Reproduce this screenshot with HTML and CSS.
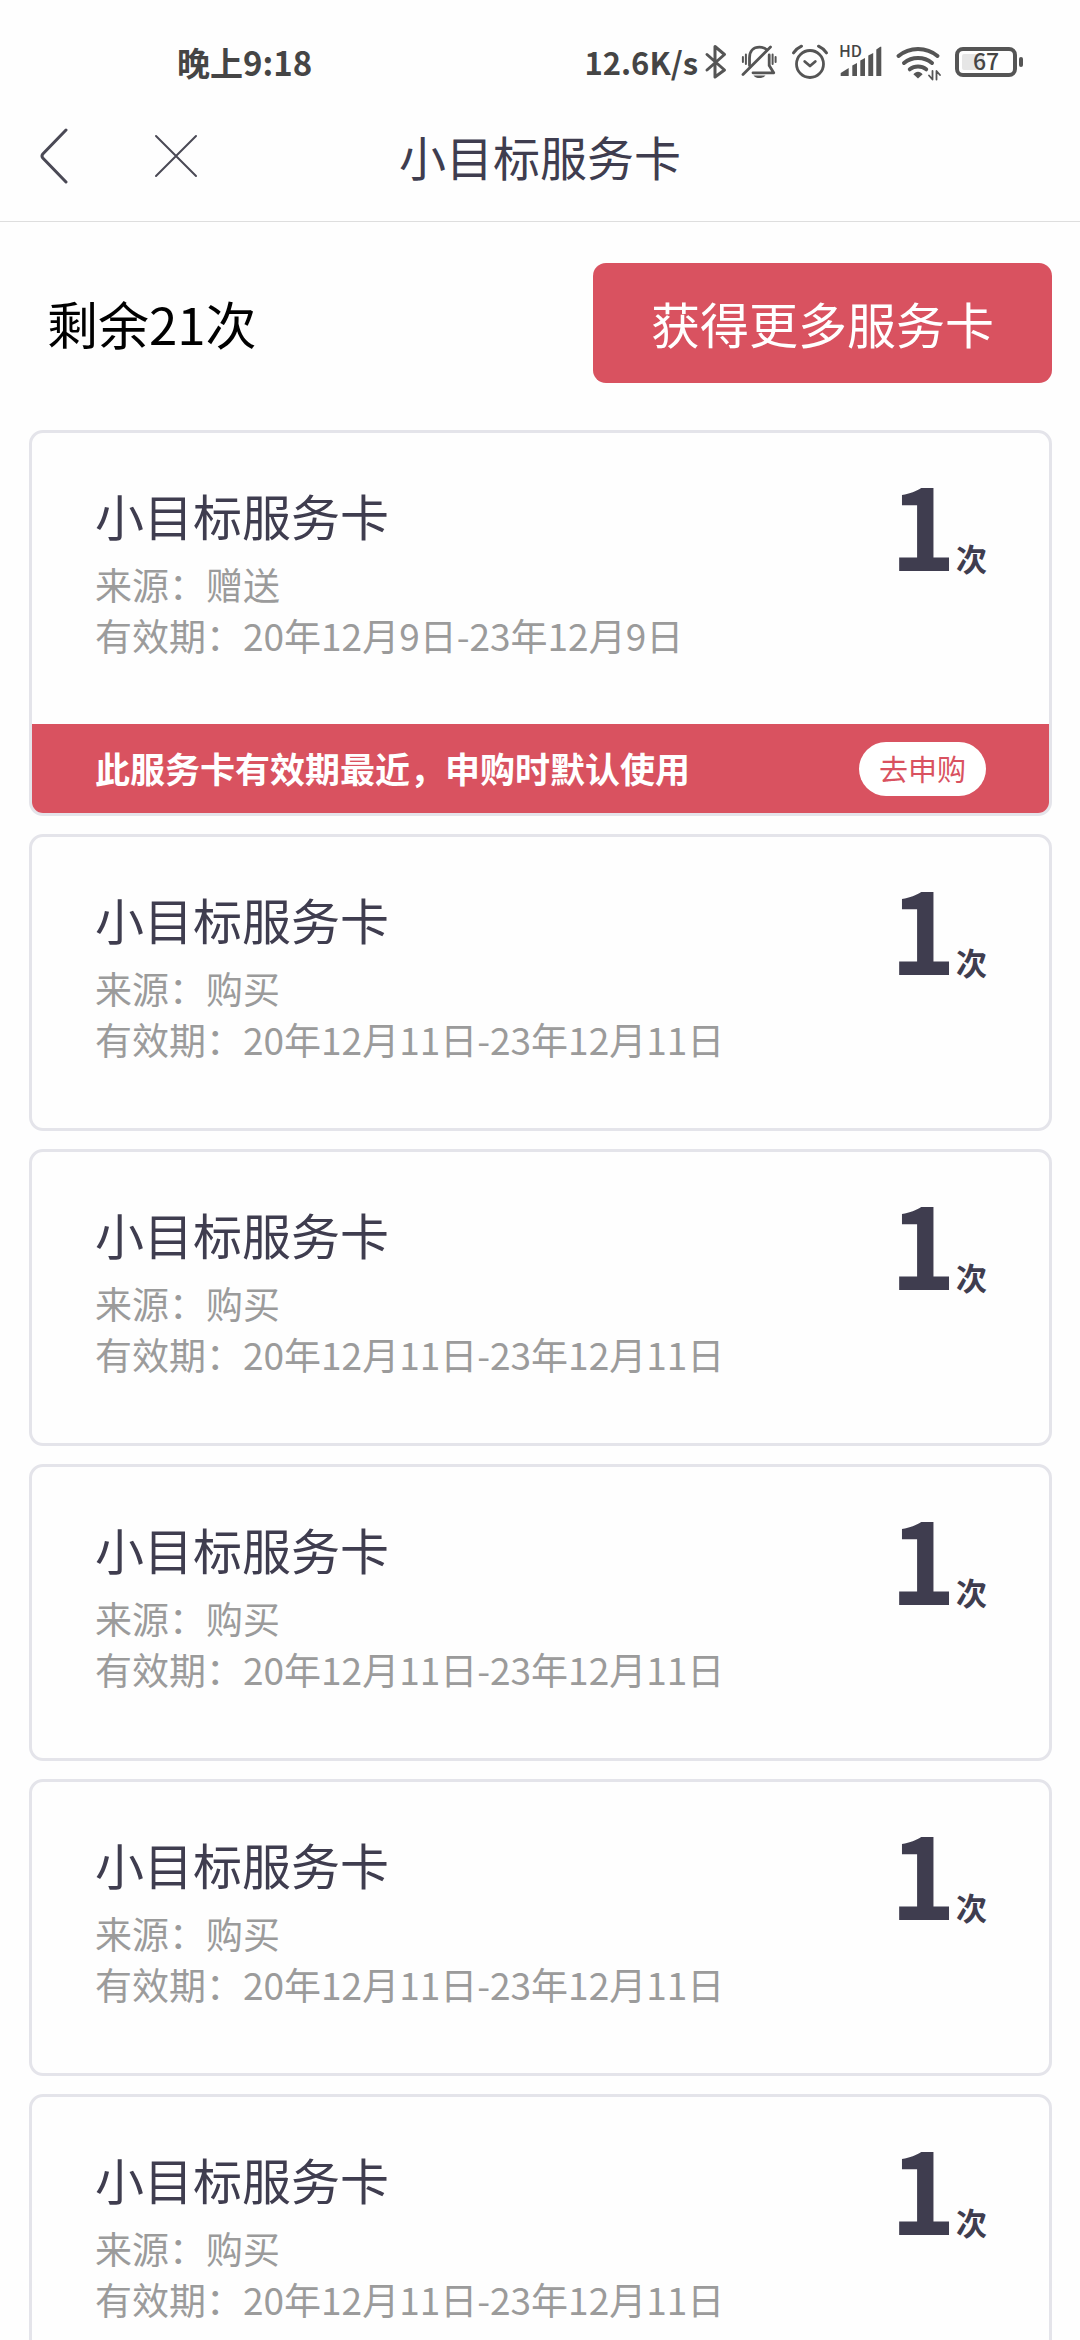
FILE: index.html
```html
<!DOCTYPE html>
<html lang="zh-CN">
<head>
<meta charset="utf-8">
<meta name="viewport" content="width=device-width, initial-scale=1">
<title>小目标服务卡</title>
<link rel="stylesheet" href="styles.css">
</head>
<body>
<div class="status">
  <span class="status-time">晚上9:18</span>
  <div class="status-right">
    <span class="status-speed">12.6K/s</span>
    <div class="status-icons">
      <svg class="icon" width="26" height="36" viewBox="0 0 26 36" aria-hidden="true"><path d="M3 10.5 20.500 26 11 33V2.500L20.500 10.500 3 26" stroke-width="3"/></svg>
      <svg class="icon" width="38" height="36" viewBox="0 0 38 36" aria-hidden="true">
        <path d="M7.500 21.500V14C7.500 7 11.500 3.200 17.500 3.200c3 0 5.500.8 7.300 2.500M27.200 11v10.500l4.500 7.300H11" stroke-width="2.800"/>
        <path d="M28.500 3 1 30.500" stroke-width="2.800"/>
        <path d="M.9 13v5M3.900 10.500v9.500M30.600 10.500v9.500M33.600 13v5" stroke-width="2"/>
        <path class="solid" d="M11.500 31.500h12c-1.500 1.800-3.500 2.600-6 2.600s-4.500-.8-6-2.600z"/>
      </svg>
      <svg class="icon" width="36" height="36" viewBox="0 0 36 36" aria-hidden="true">
        <circle cx="18" cy="20" r="13.500" stroke-width="2.800"/>
        <path d="M12.700 17.500 18 22l5.300-4.500" stroke-width="2.800"/>
        <path d="M1.500 8.800C3.500 6 6 3.800 9.500 2.200M26.500 2.200c3.300 1.500 6 3.700 8 6.600" stroke-width="3"/>
      </svg>
      <svg class="icon" width="44" height="36" viewBox="0 0 44 36" aria-hidden="true">
        <path class="solid" d="M.7 32v-3L8.700 24v8zM12.300 32V21.500l4.700-2.500v13zM20.300 32V16.500l4.700-2.500v18zM28.300 32V11.500l4.900-2.500v23zM36.300 32V5.500l4-2.800h1V32z"/>
        <text class="label-hd" x="-1" y="13">HD</text>
      </svg>
      <svg class="icon" width="46" height="36" viewBox="0 0 46 36" aria-hidden="true">
        <path d="M2.500 12C13.500 2.500 30.500 2.500 41.500 12M8 19c8-6.700 20-6.700 28 0M13.800 25.300c4.800-3.800 11.600-3.800 16.400 0" stroke-width="4"/>
        <path class="solid" d="M22 34.500l-4.600-4.200c2.300-3.400 6.900-3.400 9.200 0z"/>
        <path d="M36.500 27v8.500l-3.500-4M40.500 35.500V27l3.500 4" stroke-width="1.800"/>
      </svg>
      <svg class="icon" width="70" height="36" viewBox="0 0 70 36" aria-hidden="true">
        <rect x="3" y="5" width="58" height="26" rx="6" stroke-width="4"/>
        <rect class="charge" x="8" y="10" width="22" height="16" rx="2"/>
        <rect class="solid" x="65" y="13" width="4" height="10" rx="2"/>
        <text class="label-battery" x="32" y="26" text-anchor="middle">67</text>
      </svg>
    </div>
  </div>
</div>

<header class="nav">
  <div class="nav-actions">
    <button class="nav-button" type="button" aria-label="返回"><svg width="28" height="56" viewBox="0 0 28 56" aria-hidden="true"><path d="M26 2 2.800 26q-1.600 2 0 4L26 54" stroke-width="3"/></svg></button>
    <button class="nav-button" type="button" aria-label="关闭"><svg width="44" height="44" viewBox="0 0 44 44" aria-hidden="true"><path d="M2 2l40 40M42 2 2 42" stroke-width="2"/></svg></button>
  </div>
  <h1 class="nav-title">小目标服务卡</h1>
</header>

<main class="content">
  <section class="summary">
    <p class="remaining">剩余21次</p>
    <button class="more" type="button">获得更多服务卡</button>
  </section>

  <ul class="cards">
    <li class="card">
      <div class="card-body">
        <div class="card-info">
          <h2 class="card-title">小目标服务卡</h2>
          <p class="card-meta">来源：赠送</p>
          <p class="card-meta">有效期：20年12月9日-23年12月9日</p>
        </div>
        <p class="count"><span class="count-number">1</span>次</p>
      </div>
      <div class="notice">
        <p class="notice-text">此服务卡有效期最近，申购时默认使用</p>
        <button class="apply" type="button">去申购</button>
      </div>
    </li>
    <li class="card">
      <div class="card-body">
        <div class="card-info">
          <h2 class="card-title">小目标服务卡</h2>
          <p class="card-meta">来源：购买</p>
          <p class="card-meta">有效期：20年12月11日-23年12月11日</p>
        </div>
        <p class="count"><span class="count-number">1</span>次</p>
      </div>
    </li>
    <li class="card">
      <div class="card-body">
        <div class="card-info">
          <h2 class="card-title">小目标服务卡</h2>
          <p class="card-meta">来源：购买</p>
          <p class="card-meta">有效期：20年12月11日-23年12月11日</p>
        </div>
        <p class="count"><span class="count-number">1</span>次</p>
      </div>
    </li>
    <li class="card">
      <div class="card-body">
        <div class="card-info">
          <h2 class="card-title">小目标服务卡</h2>
          <p class="card-meta">来源：购买</p>
          <p class="card-meta">有效期：20年12月11日-23年12月11日</p>
        </div>
        <p class="count"><span class="count-number">1</span>次</p>
      </div>
    </li>
    <li class="card">
      <div class="card-body">
        <div class="card-info">
          <h2 class="card-title">小目标服务卡</h2>
          <p class="card-meta">来源：购买</p>
          <p class="card-meta">有效期：20年12月11日-23年12月11日</p>
        </div>
        <p class="count"><span class="count-number">1</span>次</p>
      </div>
    </li>
    <li class="card">
      <div class="card-body">
        <div class="card-info">
          <h2 class="card-title">小目标服务卡</h2>
          <p class="card-meta">来源：购买</p>
          <p class="card-meta">有效期：20年12月11日-23年12月11日</p>
        </div>
        <p class="count"><span class="count-number">1</span>次</p>
      </div>
    </li>
  </ul>
</main>
</body>
</html>
```

FILE: styles.css
```css
:root {
  --ink: #3f3d4f;
  --muted: #9b9b9b;
  --red: #d95260;
  --line: #e4e4ea;
  --status: #454545;
}

* {
  box-sizing: border-box;
}

body {
  display: flex;
  flex-direction: column;
  height: 100vh;
  margin: 0;
  background: #fefefe;
  color: var(--ink);
  font-family: "Noto Sans CJK SC", sans-serif;
}

h1,
h2,
p,
ul {
  margin: 0;
  padding: 0;
  font-weight: 400;
}

button {
  padding: 0;
  border: 0;
  font-family: inherit;
  cursor: pointer;
}

/* Status bar */
.status {
  display: flex;
  flex: none;
  align-items: center;
  justify-content: space-between;
  padding: 28px 56px 0 177px;
  color: var(--status);
  font-weight: 700;
  line-height: 68px;
}

.status-time {
  font-size: 33px;
}

.status-right {
  display: flex;
  align-items: center;
  gap: 6px;
}

.status-speed {
  font-size: 31px;
}

.status-icons {
  display: flex;
  align-items: center;
  gap: 12px;
}

.icon {
  display: block;
  overflow: visible;
  fill: none;
  stroke: #555;
  stroke-linecap: round;
  stroke-linejoin: round;
}

.icon .solid {
  fill: #555;
  stroke: none;
}

.icon .charge {
  fill: #e6e6e6;
  stroke: none;
}

.icon text {
  fill: var(--status);
  font-weight: 500;
  stroke: none;
}

.label-hd {
  font-size: 16px;
}

.label-battery {
  font-size: 23px;
}

/* Title bar */
.nav {
  display: grid;
  flex: none;
  grid-template-columns: 1fr auto 1fr;
  align-items: center;
  height: 126px;
  padding: 0 40px 6px;
  border-bottom: 1px solid #dedede;
}

.nav-actions {
  display: flex;
  align-items: center;
  gap: 86px;
}

.nav-button {
  display: block;
  background: none;
}

.nav-button svg {
  display: block;
  fill: none;
  stroke: #4a4955;
  stroke-linecap: round;
}

.nav-title {
  font-size: 47px;
}

/* Scrolling page */
.content {
  flex: 1;
  min-height: 0;
  padding: 41px 28px 47px 29px;
  overflow-y: auto;
  scrollbar-width: none;
}

.summary {
  display: flex;
  align-items: center;
  justify-content: space-between;
  padding: 0 0 47px 18px;
}

.remaining {
  color: #000;
  font-size: 51px;
}

.more {
  height: 120px;
  padding: 0 58px 2px;
  border-radius: 13px;
  background: var(--red);
  color: #fff;
  font-size: 49px;
}

.cards {
  display: flex;
  flex-direction: column;
  gap: 18px;
  list-style: none;
}

.card {
  border: 3px solid var(--line);
  border-radius: 14px;
  overflow: hidden;
}

.card-body {
  display: flex;
  justify-content: space-between;
  padding: 42px 62px 63px 63px;
}

.card-title {
  margin-bottom: 4px;
  font-size: 49px;
  line-height: 80px;
}

.card-meta {
  color: var(--muted);
  font-size: 37px;
  line-height: 51px;
}

.count {
  font-size: 31px;
  font-weight: 700;
  line-height: 94px;
}

.count-number {
  font-size: 112px;
}

.notice {
  display: flex;
  align-items: center;
  justify-content: space-between;
  height: 89px;
  padding: 0 63px;
  background: var(--red);
  color: #fff;
}

.notice-text {
  padding-bottom: 2px;
  font-size: 35px;
  font-weight: 700;
}

.apply {
  height: 54px;
  padding: 0 20px 1px;
  border-radius: 27px;
  background: #fff;
  color: var(--red);
  font-size: 29px;
}
```
